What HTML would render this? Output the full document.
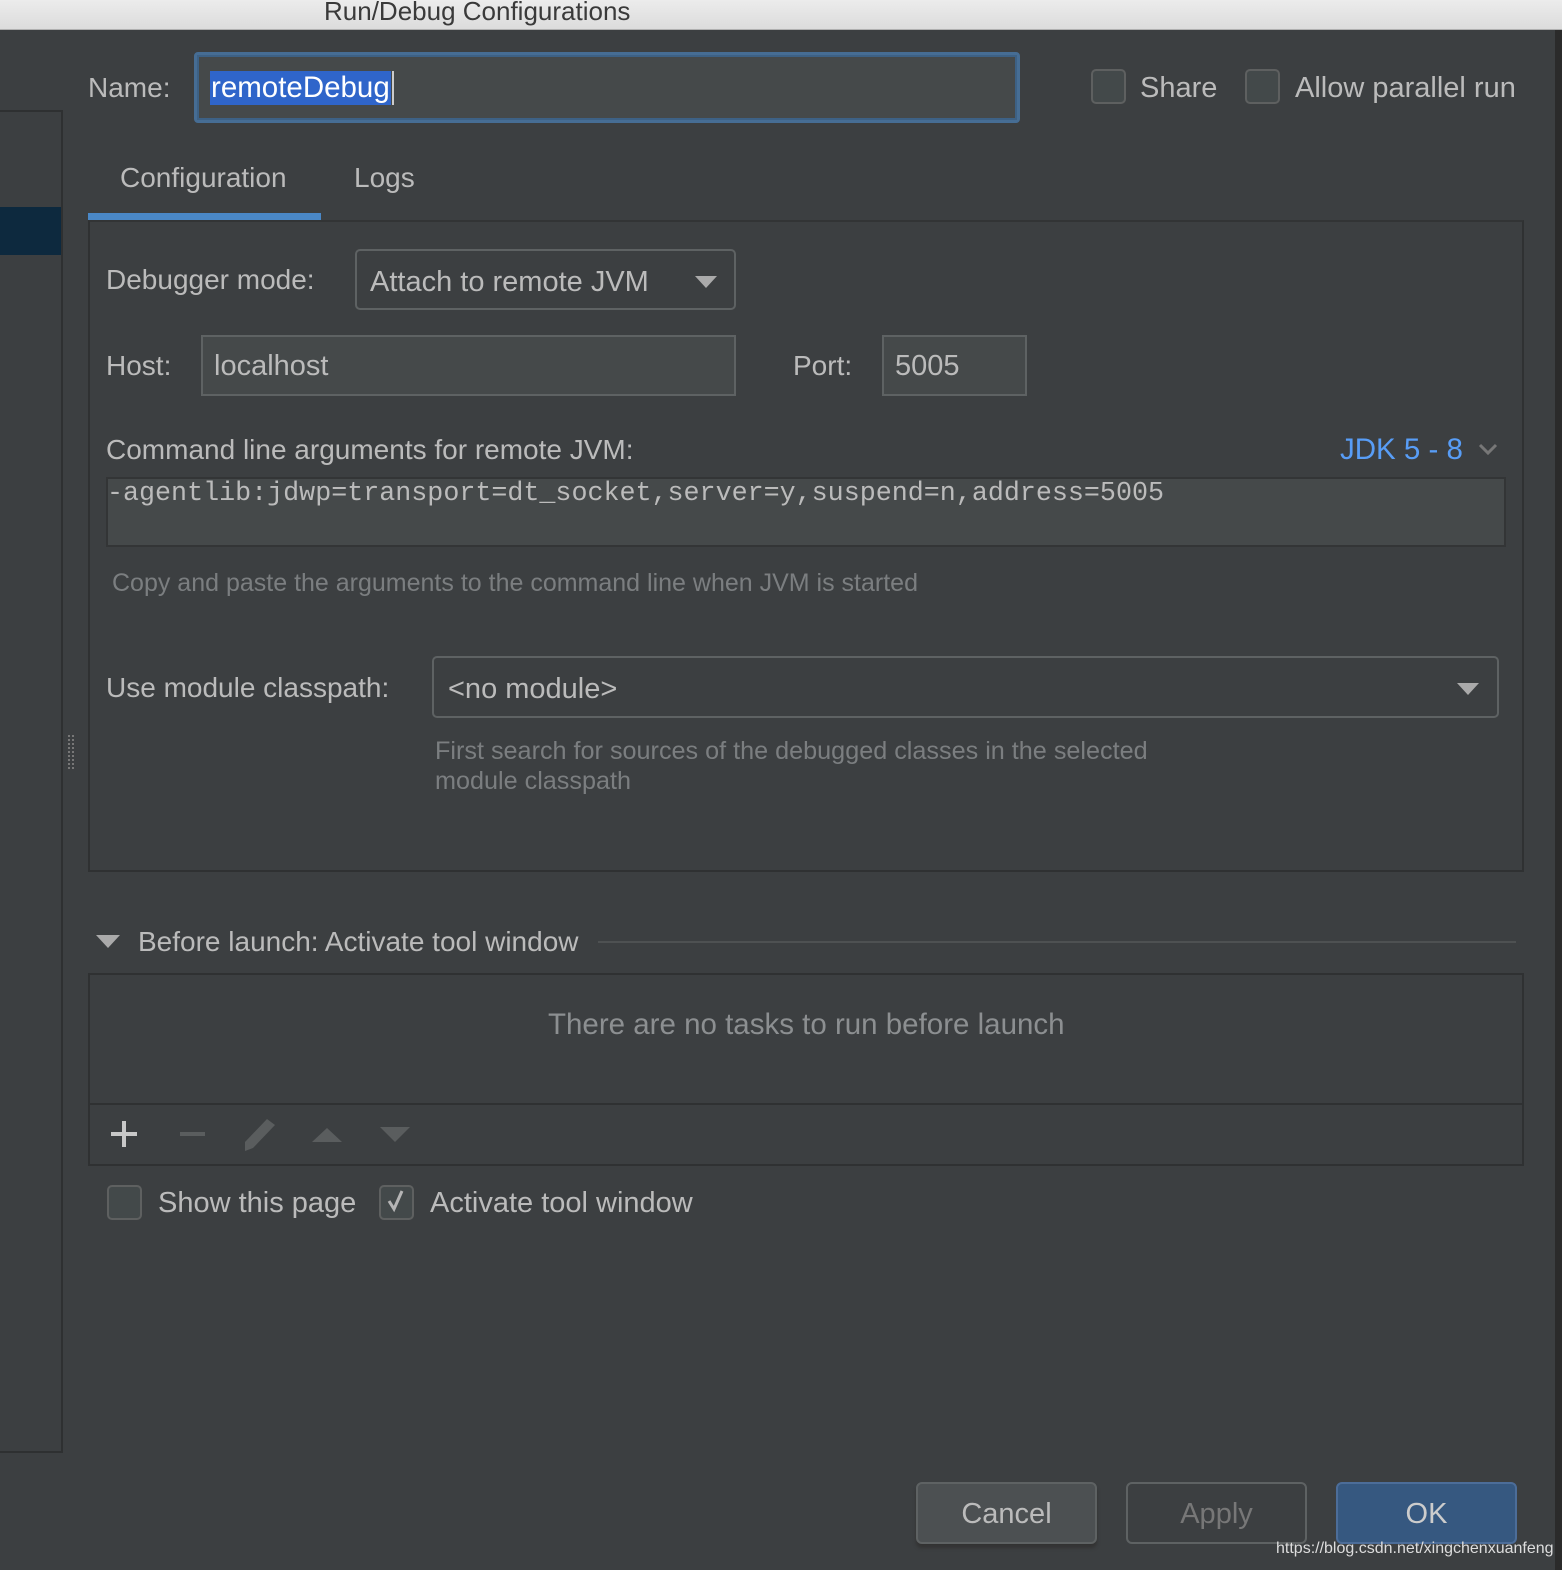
<!DOCTYPE html>
<html><head><meta charset="utf-8"><style>
*{margin:0;padding:0;box-sizing:border-box}
body{width:1562px;height:1570px;background:#3c3f41;position:relative;overflow:hidden;font-family:"Liberation Sans",sans-serif;color:#bbbbbb;font-size:28px}
.a{position:absolute;white-space:nowrap}
.t{line-height:40px;height:40px}
.cb{position:absolute;width:35px;height:35px;border:2px solid #5e6060;border-radius:5px;background:#43494a}
.fld{position:absolute;background:#45494a;border:2px solid #5e6263}
.btn{position:absolute;height:62px;border-radius:6px;text-align:center;line-height:60px;font-size:29px}
</style></head><body>
<div class="a" style="left:0;top:0;width:1562px;height:30px;background:linear-gradient(#ececec,#dcdcdc);border-bottom:1px solid #b0b0b0"></div>
<div class="a" style="left:324px;top:-6px;font-size:26px;color:#3a3a3a;line-height:34px">Run/Debug Configurations</div>
<div class="a" style="left:1555px;top:30px;width:7px;height:1540px;background:#2b2b2b"></div>
<!-- sidebar -->
<div class="a" style="left:0;top:110px;width:63px;height:1343px;border-right:2px solid #2e3031;border-top:2px solid #2e3031;border-bottom:2px solid #2e3031"></div>
<div class="a" style="left:0;top:207px;width:61px;height:48px;background:#0d293e"></div>
<div class="a" style="left:68px;top:735px;width:6px;height:34px;border-left:2px dotted #777;border-right:2px dotted #777"></div>
<!-- name -->
<div class="a t" style="left:88px;top:68px">Name:</div>
<div class="a" style="left:194px;top:52px;width:826px;height:71px;border:3px solid #466d94;border-radius:4px;background:#45494a;box-shadow:inset 0 0 0 2px #3d6185"></div>
<div class="a" style="left:210px;top:71px;height:34px;background:#2f65ca;color:#fff;font-size:29.5px;line-height:34px;padding:0 1px">remoteDebug</div>
<div class="a" style="left:392px;top:71px;width:2px;height:34px;background:#ccc"></div>
<div class="cb" style="left:1091px;top:69px"></div>
<div class="a t" style="left:1140px;top:68px;font-size:29px">Share</div>
<div class="cb" style="left:1245px;top:69px"></div>
<div class="a t" style="left:1295px;top:68px;font-size:29px">Allow parallel run</div>
<!-- tabs -->
<div class="a t" style="left:120px;top:158px">Configuration</div>
<div class="a t" style="left:354px;top:158px">Logs</div>
<div class="a" style="left:88px;top:213px;width:233px;height:8px;background:#4a88c7"></div>
<div class="a" style="left:88px;top:220px;width:1436px;height:652px;border:2px solid #2f3132;border-top:2px solid #323435"></div>
<!-- debugger mode -->
<div class="a t" style="left:106px;top:260px">Debugger mode:</div>
<div class="a" style="left:355px;top:249px;width:381px;height:61px;border:2px solid #5e6263;border-radius:5px;background:#3c3f41"></div>
<div class="a t" style="left:370px;top:262px;font-size:29px">Attach to remote JVM</div>
<div class="a" style="left:695px;top:276px;width:0;height:0;border-left:11px solid transparent;border-right:11px solid transparent;border-top:12px solid #aaa"></div>
<!-- host port -->
<div class="a t" style="left:106px;top:346px">Host:</div>
<div class="fld" style="left:201px;top:335px;width:535px;height:61px"></div>
<div class="a t" style="left:214px;top:346px;font-size:29px">localhost</div>
<div class="a t" style="left:793px;top:346px">Port:</div>
<div class="fld" style="left:882px;top:335px;width:145px;height:61px"></div>
<div class="a t" style="left:895px;top:346px;font-size:29px">5005</div>
<!-- cmd -->
<div class="a t" style="left:106px;top:430px">Command line arguments for remote JVM:</div>
<div class="a t" style="left:1340px;top:430px;color:#589df6;font-size:29.5px">JDK 5 - 8</div>
<svg class="a" style="left:1478px;top:442px" width="20" height="14"><path d="M2 3 L10 11 L18 3" stroke="#777" stroke-width="3" fill="none"/></svg>
<div class="fld" style="left:106px;top:477px;width:1400px;height:70px;border-color:#333536"></div>
<div class="a" style="left:107px;top:476px;font-family:'Liberation Mono',monospace;font-size:26.7px;line-height:36px;color:#bbb">-agentlib:jdwp=transport=dt_socket,server=y,suspend=n,address=5005</div>
<div class="a t" style="left:112px;top:563px;font-size:25px;color:#7b7e80">Copy and paste the arguments to the command line when JVM is started</div>
<!-- module -->
<div class="a t" style="left:106px;top:668px">Use module classpath:</div>
<div class="a" style="left:432px;top:656px;width:1067px;height:62px;border:2px solid #5e6263;border-radius:5px"></div>
<div class="a t" style="left:448px;top:669px;font-size:29px">&lt;no module&gt;</div>
<div class="a" style="left:1457px;top:683px;width:0;height:0;border-left:11px solid transparent;border-right:11px solid transparent;border-top:12px solid #aaa"></div>
<div class="a t" style="left:435px;top:731px;font-size:25.2px;color:#7b7e80">First search for sources of the debugged classes in the selected</div>
<div class="a t" style="left:435px;top:761px;font-size:25.2px;color:#7b7e80">module classpath</div>
<!-- before launch -->
<div class="a" style="left:96px;top:935px;width:0;height:0;border-left:12px solid transparent;border-right:12px solid transparent;border-top:13px solid #aaa"></div>
<div class="a t" style="left:138px;top:922px">Before launch: Activate tool window</div>
<div class="a" style="left:598px;top:941px;width:918px;height:2px;background:#4e5152"></div>
<div class="a" style="left:88px;top:973px;width:1436px;height:193px;border:2px solid #2f3132"></div>
<div class="a" style="left:90px;top:1103px;width:1432px;height:2px;background:#2f3132"></div>
<div class="a t" style="left:548px;top:1005px;color:#8c8f91;font-size:29.5px">There are no tasks to run before launch</div>
<svg class="a" style="left:105px;top:1115px" width="320" height="40">
<path d="M19 6 V32 M6 19 H32" stroke="#c8c8c8" stroke-width="4"/>
<path d="M75 19 H100" stroke="#5a5d5e" stroke-width="4"/>
<path d="M140 36 L140 27 L162 4 L170 10 L148 33 Z" fill="#5a5d5e"/>
<path d="M207 27 L237 27 L222 13 Z" fill="#5a5d5e"/>
<path d="M275 12 L305 12 L290 27 Z" fill="#5a5d5e"/>
</svg>
<div class="cb" style="left:107px;top:1185px"></div>
<div class="a t" style="left:158px;top:1183px;font-size:29px">Show this page</div>
<div class="cb" style="left:379px;top:1185px"></div>
<svg class="a" style="left:383px;top:1187px" width="28" height="28"><path d="M6 14 L11 22 L19 4" stroke="#b5b5b5" stroke-width="3" fill="none"/></svg>
<div class="a t" style="left:430px;top:1183px;font-size:29px">Activate tool window</div>
<!-- buttons -->
<div class="btn" style="left:916px;top:1482px;width:181px;background:#4c5052;border:2px solid #5e6263;color:#bbb;box-shadow:0 4px 3px #333">Cancel</div>
<div class="btn" style="left:1126px;top:1482px;width:181px;border:2px solid #5e6263;color:#777">Apply</div>
<div class="btn" style="left:1336px;top:1482px;width:181px;background:#365880;border:2px solid #4c6d99;color:#ccc">OK</div>
<div class="a" style="left:1276px;top:1538px;font-size:16px;color:#ddd;line-height:22px">https://blog.csdn.net/xingchenxuanfeng</div>
</body></html>
